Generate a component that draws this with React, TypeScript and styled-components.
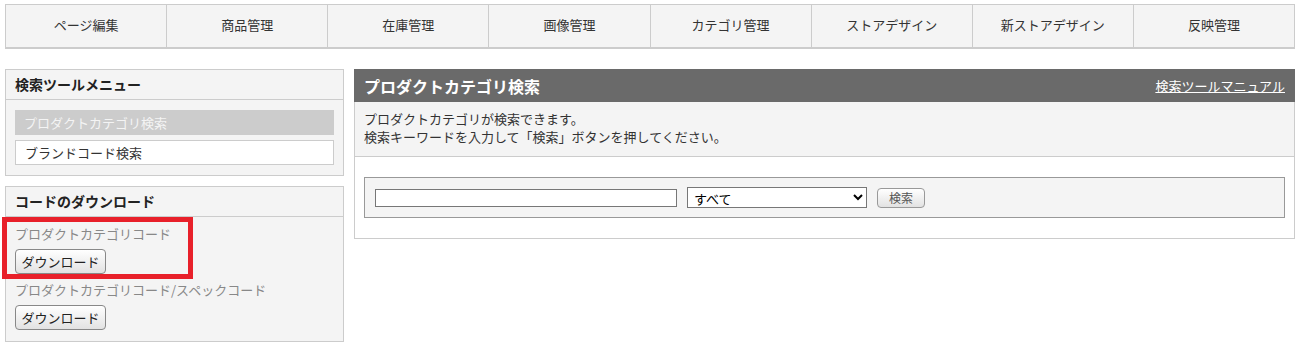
import React, { FC } from 'react'
import styled, { createGlobalStyle } from 'styled-components'

const GlobalStyle = createGlobalStyle`
body {
  margin: 0;
  background: #fff;
  font-family: "Noto Sans CJK JP", "Noto Sans", sans-serif;
  font-size: 13px;
  color: #333;
}
`

const navItems = ['ページ編集', '商品管理', '在庫管理', '画像管理', 'カテゴリ管理', 'ストアデザイン', '新ストアデザイン', '反映管理']

const App: FC = () => {
  return (
    <Page>
      <GlobalStyle />
      <Nav>
        {navItems.map((item, i) => (
          <NavItem key={item} first={i === 0}>{item}</NavItem>
        ))}
      </Nav>
      <Columns>
        <Side>
          <SideBox>
            <SideHead>検索ツールメニュー</SideHead>
            <MenuList>
              <MenuItem active>プロダクトカテゴリ検索</MenuItem>
              <MenuItem>ブランドコード検索</MenuItem>
            </MenuList>
          </SideBox>
          <SideBox>
            <SideHead>コードのダウンロード</SideHead>
            <DownloadList>
              <Highlight />
              <DlLabel>プロダクトカテゴリコード</DlLabel>
              <DlButton>ダウンロード</DlButton>
              <DlLabel>プロダクトカテゴリコード/スペックコード</DlLabel>
              <DlButton>ダウンロード</DlButton>
            </DownloadList>
          </SideBox>
        </Side>
        <Main>
          <MainHead>
            <MainTitle>プロダクトカテゴリ検索</MainTitle>
            <ManualLink href="#">検索ツールマニュアル</ManualLink>
          </MainHead>
          <Desc>
            プロダクトカテゴリが検索できます。<br />
            検索キーワードを入力して「検索」ボタンを押してください。
          </Desc>
          <MainBody>
            <SearchBox>
              <KeywordInput type="text" />
              <CategorySelect defaultValue="all">
                <option value="all">すべて</option>
              </CategorySelect>
              <SearchButton>検索</SearchButton>
            </SearchBox>
          </MainBody>
        </Main>
      </Columns>
    </Page>
  )
}

const Page = styled.div`
padding: 4px 10px 0 5px;
`
const Nav = styled.div`
display: flex;
height: 42px;
border: 1px solid #ccc;
border-bottom: 2px solid #ccc;
background: #f4f4f4;
`
const NavItem = styled.div<{ first?: boolean }>`
flex: 1;
display: flex;
align-items: center;
justify-content: center;
padding-bottom: 3px;
border-left: ${p => (p.first ? 'none' : '1px solid #ccc')};
color: #333;
font-size: 13px;
`
const Columns = styled.div`
display: flex;
align-items: flex-start;
gap: 10px;
margin-top: 20px;
`
const Side = styled.div`
width: 339px;
flex-shrink: 0;
display: flex;
flex-direction: column;
gap: 10px;
`
const SideBox = styled.div`
border: 1px solid #ccc;
background: #f4f4f4;
`
const SideHead = styled.div`
height: 29px;
line-height: 29px;
padding: 0 9px;
border-bottom: 1px solid #ccc;
font-weight: bold;
font-size: 14px;
color: #222;
`
const MenuList = styled.div`
display: flex;
flex-direction: column;
gap: 5px;
padding: 10px 9px;
`
const MenuItem = styled.div<{ active?: boolean }>`
height: ${p => (p.active ? '25px' : '23px')};
line-height: ${p => (p.active ? '25px' : '23px')};
padding: 0 9px;
font-size: 13px;
background: ${p => (p.active ? '#ccc' : '#fff')};
color: ${p => (p.active ? '#f4f4f4' : '#333')};
border: ${p => (p.active ? 'none' : '1px solid #ccc')};
`
const DownloadList = styled.div`
position: relative;
display: flex;
flex-direction: column;
align-items: flex-start;
padding: 7px 9px 11px;
`
const DlLabel = styled.div`
height: 20px;
line-height: 20px;
color: #888;
font-size: 13px;
margin-bottom: 5px;
& ~ & {
  margin-top: 6px;
}
`
const DlButton = styled.button`
box-sizing: border-box;
flex-shrink: 0;
width: 91px;
height: 25px;
padding: 0;
border: 1px solid #888;
border-radius: 4px;
background: linear-gradient(#fff, #e2e2e2);
font-family: inherit;
font-size: 13px;
color: #222;
`
const Highlight = styled.div`
position: absolute;
left: -4px;
top: 0;
width: 191px;
height: 62px;
box-sizing: border-box;
border: 5px solid #e8202a;
pointer-events: none;
`
const Main = styled.div`
flex: 1;
border: 1px solid #ccc;
border-top: none;
`
const MainHead = styled.div`
display: flex;
align-items: center;
justify-content: space-between;
height: 33px;
margin: 0 -1px;
padding: 0 10px;
background: #6a6a6a;
`
const MainTitle = styled.div`
color: #fff;
font-weight: bold;
font-size: 16px;
`
const ManualLink = styled.a`
color: #fff;
font-size: 13px;
text-decoration: underline;
`
const Desc = styled.div`
padding: 8px 9px 10px;
line-height: 18px;
font-size: 13px;
background: #f4f4f4;
border-bottom: 1px solid #ccc;
color: #333;
`
const MainBody = styled.div`
padding: 20px 9px 20px;
`
const SearchBox = styled.div`
display: flex;
align-items: center;
gap: 10px;
height: 39px;
padding: 0 10px;
border: 1px solid #999;
background: #f4f4f4;
`
const KeywordInput = styled.input`
width: 302px;
height: 18px;
box-sizing: border-box;
border: 1px solid #777;
padding: 0 3px;
background: #fff;
`
const CategorySelect = styled.select`
width: 180px;
height: 21px;
box-sizing: border-box;
border: 1px solid #777;
border-radius: 0;
background: #fff;
font-family: inherit;
font-size: 13px;
color: #000;
padding: 0 2px;
`
const SearchButton = styled.button`
width: 48px;
height: 20px;
padding: 0;
border: 1px solid #999;
border-radius: 4px;
background: linear-gradient(#fff, #e2e2e2);
font-family: inherit;
font-size: 12px;
color: #555;
`

export default App
